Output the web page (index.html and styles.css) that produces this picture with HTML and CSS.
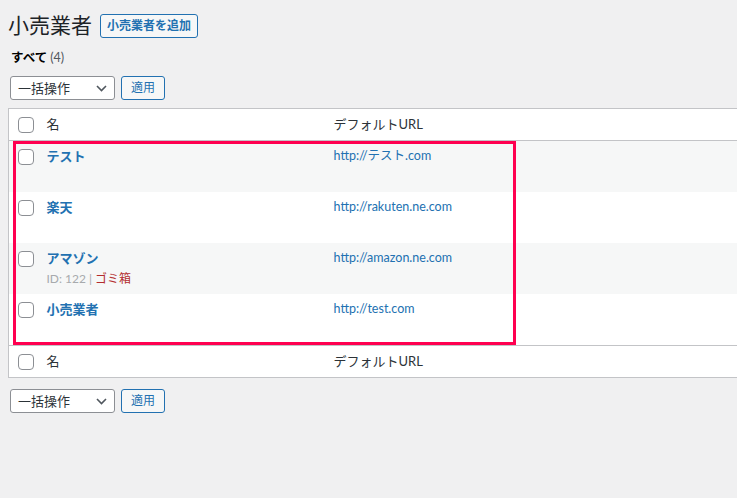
FILE: index.html
```html
<!doctype html>
<html>
<head>
  <meta charset="utf-8">
  <title>小売業者</title>
  <link rel="stylesheet" href="styles.css">
</head>
<body>
  <div class="wrap">
    <div class="titlebar">
      <h1>小売業者</h1>
      <a class="title-action" href="#">小売業者を追加</a>
    </div>
    <ul class="subsubsub">
      <li><a class="current" href="#">すべて <span class="count">(4)</span></a></li>
    </ul>

    <div class="tablenav">
      <div class="select">
        <span>一括操作</span>
        <svg width="11" height="7" viewBox="0 0 11 7"><path d="M1 1l4.5 4.5L10 1" fill="none" stroke="#50575e" stroke-width="1.6"/></svg>
      </div>
      <button class="button">適用</button>
    </div>

    <div class="table-holder">
      <table class="list">
        <thead>
          <tr>
            <th class="check"><span class="box"></span></th>
            <th class="name">名</th>
            <th class="url">デフォルトURL</th>
          </tr>
        </thead>
        <tbody>
          <tr class="alt">
            <td class="check"><span class="box"></span></td>
            <td class="name"><a class="title" href="#">テスト</a><div class="row-actions hidden">ID: 0</div></td>
            <td class="url"><a href="#">http://テスト.com</a></td>
          </tr>
          <tr>
            <td class="check"><span class="box"></span></td>
            <td class="name"><a class="title" href="#">楽天</a><div class="row-actions hidden">ID: 0</div></td>
            <td class="url"><a href="#">http://rakuten.ne.com</a></td>
          </tr>
          <tr class="alt">
            <td class="check"><span class="box"></span></td>
            <td class="name"><a class="title" href="#">アマゾン</a><div class="row-actions">ID: 122 | <a class="trash" href="#">ゴミ箱</a></div></td>
            <td class="url"><a href="#">http://amazon.ne.com</a></td>
          </tr>
          <tr>
            <td class="check"><span class="box"></span></td>
            <td class="name"><a class="title" href="#">小売業者</a><div class="row-actions hidden">ID: 0</div></td>
            <td class="url"><a href="#">http://test.com</a></td>
          </tr>
        </tbody>
        <tfoot>
          <tr>
            <th class="check"><span class="box"></span></th>
            <th class="name">名</th>
            <th class="url">デフォルトURL</th>
          </tr>
        </tfoot>
      </table>
      <div class="highlight"></div>
    </div>

    <div class="tablenav bottom">
      <div class="select">
        <span>一括操作</span>
        <svg width="11" height="7" viewBox="0 0 11 7"><path d="M1 1l4.5 4.5L10 1" fill="none" stroke="#50575e" stroke-width="1.6"/></svg>
      </div>
      <button class="button">適用</button>
    </div>
  </div>
</body>
</html>
```

FILE: styles.css
```css
html { overflow: hidden; }
body {
  margin: 0;
  background: #f0f0f1;
  color: #3c434a;
  font-family: "Lato", "Noto Sans CJK JP", sans-serif;
  font-size: 13px;
  line-height: 1.4;
}
a { text-decoration: none; color: #2271b1; }

.wrap { padding: 10px 0 0 8px; width: 820px; }

.titlebar { display: flex; align-items: center; gap: 8px; height: 30px; }
h1 {
  margin: 0;
  font-size: 21px;
  font-weight: 400;
  color: #1d2327;
  line-height: 30px;
}
.title-action {
  display: inline-block;
  border: 1px solid #2271b1;
  border-radius: 3px;
  background: #f6f7f7;
  padding: 0 6px;
  height: 22px;
  line-height: 22px;
  font-size: 12px;
  font-weight: 600;
  margin-top: 2px;
}

.subsubsub { list-style: none; margin: 9px 0 0 3px; padding: 0; height: 20px; font-size: 12.5px; }
.subsubsub a.current { color: #000; font-weight: 600; }
.subsubsub .count { color: #50575e; font-weight: 400; }

.tablenav { display: flex; gap: 6px; margin: 7px 0 0 2px; height: 24px; }
.tablenav.bottom { margin-top: 11px; }
.select {
  height: 22px;
  border: 1px solid #8c8f94;
  border-radius: 3px;
  background: #fff;
  display: flex;
  align-items: center;
  justify-content: space-between;
  padding: 0 7px 0 7px;
  width: 89px;
  font-size: 13px;
  color: #2c3338;
}
.button {
  font-family: inherit;
  font-size: 12px;
  color: #2271b1;
  border: 1px solid #2271b1;
  border-radius: 3px;
  background: #f6f7f7;
  height: 24px;
  padding: 0 9px;
  line-height: 22px;
}

.table-holder { position: relative; margin-top: 8px; }
.list {
  border-collapse: collapse;
  table-layout: fixed;
  width: 812px;
  background: #fff;
  border: 1px solid #c3c4c7;
}
.list th, .list td { text-align: left; font-weight: 400; vertical-align: top; }
.list th { font-size: 13px; color: #2c3338; height: 31px; padding: 0 10px; vertical-align: middle; }
.list thead th { border-bottom: 1px solid #c3c4c7; }
.list tfoot th { border-top: 1px solid #c3c4c7; }
.list .check { width: 28px; padding: 0 0 0 9px; box-sizing: border-box; }
.list .name { width: 287px; box-sizing: border-box; }
.list td { padding: 5px 10px; height: 51px; box-sizing: border-box; }
.list td.check { padding: 8px 0 0 9px; }
.list tbody tr.alt { background: #f6f7f7; }

.box {
  display: block;
  width: 14px;
  height: 14px;
  border: 1px solid #8c8f94;
  border-radius: 4px;
  background: #fff;
}
.title { font-size: 13px; font-weight: 600; line-height: 20px; display: block; }
.url a { font-size: 12.5px; line-height: 20px; }
.row-actions { font-size: 12px; line-height: 21px; color: #a7aaad; }
.row-actions.hidden { visibility: hidden; }
.row-actions .trash { color: #b32d2e; }

.highlight {
  position: absolute;
  left: 5px;
  top: 33px;
  width: 497px;
  height: 198px;
  border: 3px solid #ff0050;
}
```
